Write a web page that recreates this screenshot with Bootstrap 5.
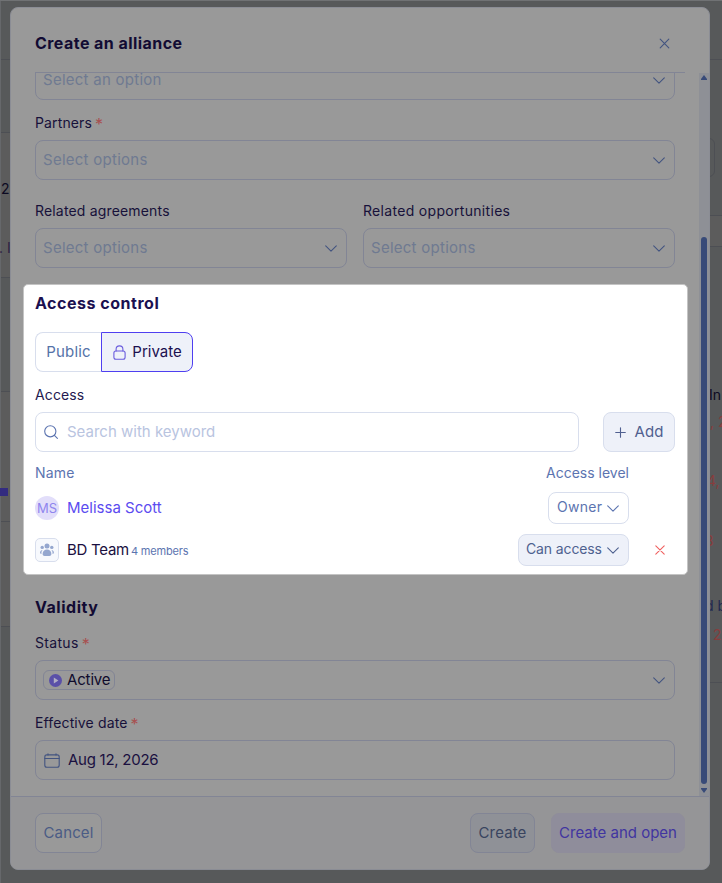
<!DOCTYPE html>
<html lang="en"><head><meta charset="utf-8"><title>Create an alliance</title>
<link href="https://cdn.jsdelivr.net/npm/bootstrap@5.3.0/dist/css/bootstrap.min.css" rel="stylesheet">
<script src="https://cdn.jsdelivr.net/npm/bootstrap@5.3.0/dist/js/bootstrap.bundle.min.js"></script>
<style>
html,body{height:883px;overflow:hidden}
body{position:relative;background:#57595a;font-family:Inter,"Noto Sans",sans-serif;font-size:14px;line-height:24px;color:#1a1040;border-top:1px solid #707274}
svg{display:block;flex:none;fill:none;stroke:currentColor;stroke-width:1.1;stroke-linecap:round;stroke-linejoin:round}
/* page behind the dialog */
.page-strip{top:0;bottom:0;width:12px}
.page-strip .band{border-bottom:1px solid #4d4f54;flex:none}
.page-strip .alt{background:#5c5c5c}
.strip-l{left:0;border-left:1px solid #66686b}
.strip-r{right:0}
.peek{position:absolute;white-space:nowrap;line-height:20px;color:#0c0a22}
.peek-red{color:#873d3d}
.peek-bar{position:absolute;left:-1px;top:487px;width:8px;height:8px;background:#332c80}
.peek-box{position:absolute;right:7px;top:137px;width:20px;height:39px;border:1px solid #4d4f54;border-radius:6px}
/* dialog */
.dialog{position:relative;margin:6px 12px 0 10px;width:700px;height:863px;background:#999;border:1px solid #8b8d95;border-radius:8px;overflow:hidden}
.dialog-head{height:65px;margin:0 24px;border-bottom:1px solid #828595;padding-top:6px}
.dialog-head svg{margin-right:15px}
.ttl{font-size:16px;font-weight:700;line-height:24px;color:#120b33;letter-spacing:.45px}
.ttl-wide{letter-spacing:.52px}
.scroll-area{height:723px;overflow:hidden}
.form-area{width:664px;padding-left:24px}
.lbl{line-height:24px;height:40px;padding-top:11px;color:#17113a;letter-spacing:.13px}
.lbl-far{height:48px;padding-top:19px}
.lbl-status{height:41px;padding-top:12px}
.ls-2{letter-spacing:.17px}.ls-3{letter-spacing:.31px}
.ls-n1{letter-spacing:-.13px}.ls-n2{letter-spacing:-.26px}
.req{position:relative;top:2px;color:#a85050;font-size:16px;line-height:1;letter-spacing:0;margin-left:-1px}
.fld{height:40px;border:1px solid #828595;border-radius:8px;padding:0 9px 0 7px;font-size:15px}
.fld-cut{margin-top:-13px}
.ph{color:#6f7a91;letter-spacing:.26px}
.ph-light{color:#b9c4df}
.ico{color:#435480}
.spot{margin:16px -13px 0 -12px;height:291px;border:1px solid #c4c4c4;border-radius:5px;background:#fff;padding:6px 12px 0 11px}
.spot .ttl{color:#1b1050}
.spot .lbl{color:#241a50}
.spot .fld{border-color:#d8deed}
.seg{height:40px;margin-top:17px;font-size:15px}
.seg-a{width:66px;border:1px solid #d8deed;border-right:0;border-radius:8px 0 0 8px;color:#5572a8;letter-spacing:.2px}
.seg-b{width:92px;border:1px solid #4f3ff0;border-radius:0 8px 8px 0;background:#eef1f9;color:#1b1050;gap:6px;padding-left:1px}
.seg-b svg{color:#6a5cdd}
.spot .add-btn{width:72px;background:#eef1f9;color:#506090;padding:0 8px 0 9px}
.search-fld{width:544px;gap:8px}
.line-head{height:40px;padding-top:2px}
.line{height:32px}
.line-2{margin-top:10px}
.blue{color:#5c74b0}
.name{font-size:15px}
.violet{color:#5b4bf0}
.tag{border:1px solid #d8deed;border-radius:8px;width:81px;height:32px;padding:0 9px 2px 8px}
.tag svg{margin-top:2px}
.tag-can{width:111px;padding-left:7px}
.soft{background:#eef1f9;color:#4e618f}
.rest{width:46px}
.rest-x{padding-right:10px}
.rest-x svg{color:#f0605f}
.avatar{width:24px;height:24px;font-size:13px;margin-right:8px}
.av-ms{background:#e2defa;color:#8f85ee;border-radius:50%}
.av-team{background:#f7f9fd;border:1px solid #d8deed;border-radius:5px;color:#95a7cf}
.av-team svg{fill:currentColor;stroke:none}
.note{font-size:11px;margin:2px 0 0 2px;letter-spacing:-.18px}
.chip{border:1px solid #828595;border-radius:6px;height:20px;padding:0 4px 0 5px;gap:5px;font-size:15px;letter-spacing:-.15px;color:#100b2c}
.chip svg{stroke:none}
.track{width:10px;background:#8e9096;padding:2px 0 3px}
.track svg{fill:#384a78;stroke:none}
.thumb{width:6px;height:547px;border-radius:3px;background:#384a78}
.dialog-foot{height:73px;border-top:1px solid #828595;background:#959597;padding:0 24px}
.act{height:40px;border:1px solid #828595;border-radius:8px;font-size:15px;letter-spacing:.13px}
.act-cancel{width:67px;background:#999;color:#4b5c85}
.act-create{width:65px;background:#8f9197;color:#39445f}
.act-open{width:134px;background:#8f8d9b;border-color:#8f8d9b;color:#4135a0;letter-spacing:0}
</style></head><body>
<div class="page-strip strip-l position-absolute d-flex flex-column">
<div class="band" style="height:59px"></div><div class="band" style="height:73px"></div><div class="band alt" style="height:145px"></div><div class="band" style="height:114px"></div><div class="band alt" style="height:130px"></div><div class="band alt" style="height:105px"></div>
<span class="peek" style="left:0;top:178px">2</span>
<span class="peek" style="left:-2px;top:237px;color:#2b2144">. I</span>
<div class="peek-bar"></div>
</div>
<div class="page-strip strip-r position-absolute d-flex flex-column">
<div class="band" style="height:59px"></div><div class="band" style="height:156px"></div><div class="band alt" style="height:31px"></div><div class="band" style="height:436px"></div>
<div class="peek-box"></div>
<span class="peek" style="left:-1px;top:384px">In</span>
<span class="peek peek-red" style="left:0;top:411px">, 2</span>
<span class="peek peek-red" style="left:-3px;top:470px">4,</span>
<span class="peek peek-red" style="left:-5px;top:530px">3</span>
<span class="peek" style="left:-5px;top:595px;color:#1f2850">d b</span>
<span class="peek peek-red" style="left:3px;top:624px">2</span>
</div>
<main class="dialog">
<header class="dialog-head d-flex align-items-center justify-content-between"><h1 class="ttl m-0">Create an alliance</h1>
<svg class="ico" width="11" height="11" viewBox="0 0 11 11"><path d="M1.2 1.2l8.6 8.6M9.8 1.2l-8.6 8.6"/></svg></header>
<div class="scroll-area d-flex justify-content-between">
<div class="form-area">
<div class="fld fld-cut ph d-flex align-items-center justify-content-between"><span>Select an option</span><svg class="ico" width="12" height="7" viewBox="0 0 12 7"><path d="M.7.9L6 6.1 11.3.9"/></svg></div>
<div class="lbl">Partners <span class="req">*</span></div>
<div class="fld ph d-flex align-items-center justify-content-between"><span>Select options</span><svg class="ico" width="12" height="7" viewBox="0 0 12 7"><path d="M.7.9L6 6.1 11.3.9"/></svg></div>
<div class="row gx-3">
<div class="col-6"><div class="lbl lbl-far ls-2">Related agreements</div>
<div class="fld ph d-flex align-items-center justify-content-between"><span>Select options</span><svg class="ico" width="12" height="7" viewBox="0 0 12 7"><path d="M.7.9L6 6.1 11.3.9"/></svg></div></div>
<div class="col-6"><div class="lbl lbl-far ls-3">Related opportunities</div>
<div class="fld ph d-flex align-items-center justify-content-between"><span>Select options</span><svg class="ico" width="12" height="7" viewBox="0 0 12 7"><path d="M.7.9L6 6.1 11.3.9"/></svg></div></div>
</div>
<section class="spot">
<h2 class="ttl ttl-wide m-0">Access control</h2>
<div class="seg d-flex">
<div class="seg-a d-flex align-items-center justify-content-center">Public</div>
<div class="seg-b d-flex align-items-center justify-content-center"><svg width="13" height="15" viewBox="0 0 13 15"><rect x=".9" y="6" width="11.2" height="8.3" rx="2"/><path d="M3.1 6V4.3a3.4 3.4 0 0 1 6.8 0V6"/></svg><span>Private</span></div>
</div>
<div class="lbl">Access</div>
<div class="d-flex justify-content-between">
<div class="fld search-fld d-flex align-items-center"><svg width="16" height="16" viewBox="0 0 16 16" class="blue"><circle cx="7.3" cy="7.3" r="5.6"/><path d="M11.4 11.4l3 3"/></svg><span class="ph-light">Search with keyword</span></div>
<div class="fld add-btn d-flex align-items-center justify-content-center gap-2 ls-2"><svg width="11" height="11" viewBox="0 0 11 11"><path d="M5.5.7v9.6M.7 5.5h9.6"/></svg><span>Add</span></div>
</div>
<div class="line-head blue d-flex align-items-center"><span class="ls-2">Name</span><span class="ms-auto">Access level</span><span class="rest"></span></div>
<div class="line d-flex align-items-center"><span class="avatar av-ms d-flex align-items-center justify-content-center">MS</span><span class="name violet">Melissa Scott</span>
<span class="tag blue ms-auto d-flex align-items-center justify-content-between"><span class="ls-3">Owner</span><svg width="12" height="7" viewBox="0 0 12 7"><path d="M.7.9L6 6.1 11.3.9"/></svg></span><span class="rest"></span></div>
<div class="line line-2 d-flex align-items-center"><span class="avatar av-team d-flex align-items-center justify-content-center"><svg width="16" height="14" viewBox="0 0 16 14"><circle cx="8" cy="3" r="2.5"/><circle cx="3.2" cy="4.4" r="1.7"/><circle cx="12.8" cy="4.4" r="1.7"/><path d="M3.6 11c0-3 2-4.6 4.4-4.6s4.4 1.6 4.4 4.6c0 1.3-.8 2-2 2H5.6c-1.2 0-2-.7-2-2zM3.7 7C2.5 8 2.3 9.5 2.5 11 .4 11 .4 7.4 3.7 7zM12.3 7c1.2 1 1.4 2.5 1.2 4 2.1 0 2.1-3.6-1.2-4z"/></svg></span><span class="name ls-n2">BD Team</span><span class="note blue">4 members</span>
<span class="tag tag-can soft ms-auto d-flex align-items-center justify-content-between"><span class="ls-n1">Can access</span><svg width="12" height="7" viewBox="0 0 12 7"><path d="M.7.9L6 6.1 11.3.9"/></svg></span>
<span class="rest rest-x d-flex justify-content-end"><svg width="10" height="10" viewBox="0 0 10 10"><path d="M.8.8l8.4 8.4M9.2.8L.8 9.2"/></svg></span></div>
</section>
<h2 class="ttl ttl-wide mb-0 mt-3 pt-1">Validity</h2>
<div class="lbl lbl-status"><span class="ls-3">Status</span> <span class="req">*</span></div>
<div class="fld d-flex align-items-center justify-content-between"><span class="chip d-flex align-items-center"><svg width="13" height="13" viewBox="0 0 13 13"><circle cx="6.5" cy="6.5" r="6.5" fill="#5a50a8"/><path d="M4.8 3.6v5.8l4.6-2.9z" fill="#b0aec4"/></svg>Active</span><svg class="ico" width="12" height="7" viewBox="0 0 12 7"><path d="M.7.9L6 6.1 11.3.9"/></svg></div>
<div class="lbl">Effective date <span class="req">*</span></div>
<div class="fld d-flex align-items-center gap-2 ps-2"><svg class="ico" width="16" height="15" viewBox="0 0 16 15"><rect x=".8" y="1.9" width="14.4" height="12.4" rx="2"/><path d="M.8 5.5h14.4M4 .7v1.2M12 .7v1.2"/></svg><span class="ls-n2">Aug 12, 2026</span></div>
</div>
<div class="track d-flex flex-column align-items-center justify-content-between"><svg width="6" height="5" viewBox="0 0 6 5"><path d="M3 0l3 4v1H0V4z"/></svg><div class="d-flex flex-column gap-1"><div class="thumb"></div><svg width="6" height="5" viewBox="0 0 6 5"><path d="M3 5L0 1V0h6v1z"/></svg></div></div>
</div>
<footer class="dialog-foot d-flex align-items-center gap-3">
<div class="act act-cancel d-flex align-items-center justify-content-center">Cancel</div>
<div class="act act-create d-flex align-items-center justify-content-center ms-auto">Create</div>
<div class="act act-open d-flex align-items-center justify-content-center">Create and open</div>
</footer>
</main>
</body></html>
